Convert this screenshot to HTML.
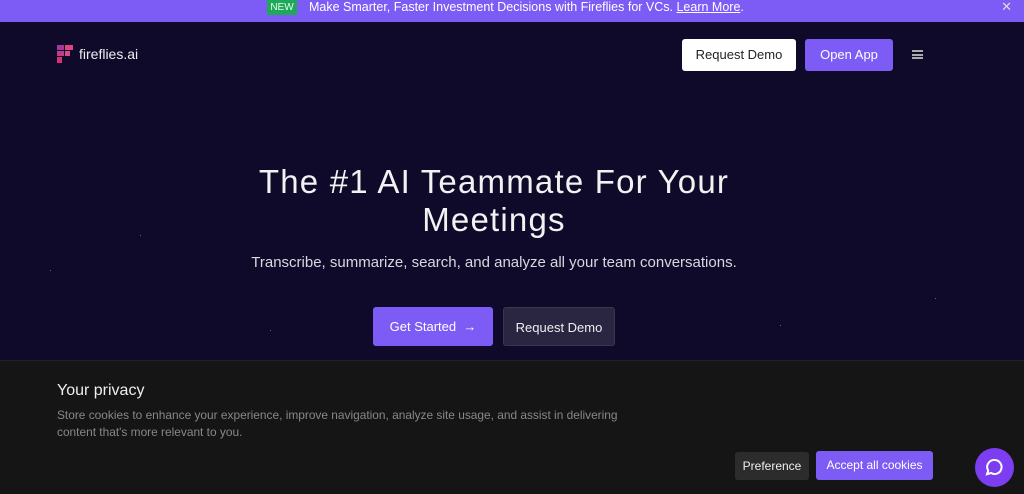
<!DOCTYPE html>
<html><head><style>
*{margin:0;padding:0;box-sizing:border-box}
body{width:1024px;height:494px;overflow:hidden;background:#0f0a2a;font-family:"Liberation Sans",sans-serif;position:relative}
.top{position:absolute;left:0;top:0;width:1024px;height:22px;background:#7c5cf5;color:#fff;font-size:12.5px}
.new{position:absolute;left:267px;top:0;width:30px;height:15px;background:#1fa85a;color:#e6ffe6;font-size:10px;text-align:center;line-height:15px}
.tt{position:absolute;left:309px;top:0;line-height:15px}
.x{position:absolute;right:12px;top:0;line-height:14px;color:#ddd;font-size:13px}
.btn{position:absolute;font-size:13px;text-align:center;border-radius:3px}
.star{position:absolute;width:1px;height:1px;background:#667}
</style></head><body>
<div class="top"><div class="new">NEW</div><div class="tt">Make Smarter, Faster Investment Decisions with Fireflies for VCs. <u>Learn More</u>.</div><div class="x">✕</div></div>
<svg style="position:absolute;left:57px;top:45px" width="16" height="18" viewBox="0 0 16 18"><rect x="0" y="0" width="7" height="5" fill="#a03a9a"/><rect x="8" y="0" width="8" height="5" fill="#e0447c"/><rect x="0" y="6" width="7" height="5" fill="#c23a8a"/><rect x="8" y="6" width="5" height="5" fill="#d84a8c"/><rect x="0" y="12" width="5" height="6" fill="#d8306e"/></svg>
<div style="position:absolute;left:79px;top:46px;color:#eee;font-size:14px">fireflies.ai</div>
<div class="btn" style="left:682px;top:39px;width:114px;height:32px;background:#fff;color:#222;line-height:32px">Request Demo</div>
<div class="btn" style="left:805px;top:39px;width:88px;height:32px;background:#7c5cf5;color:#fff;line-height:32px">Open App</div>
<div style="position:absolute;left:912px;top:50px;width:11px;height:9px;border-top:2px solid #aaa;border-bottom:2px solid #aaa"><div style="margin-top:1.5px;height:2px;background:#aaa"></div></div>
<div style="position:absolute;left:0;top:163px;width:988px;text-align:center;color:#f2f2f2;font-size:33px;line-height:38px;letter-spacing:1.2px">The #1 AI Teammate For Your<br>Meetings</div>
<div style="position:absolute;left:0;top:254px;width:988px;text-align:center;color:#d8d8e0;font-size:15px">Transcribe, summarize, search, and analyze all your team conversations.</div>
<div class="btn" style="left:373px;top:307px;width:120px;height:39px;background:#7c5cf5;color:#fff;line-height:39px">Get Started &nbsp;→</div>
<div class="btn" style="left:503px;top:307px;width:112px;height:39px;background:#2a2540;color:#eee;line-height:39px;border:1px solid #3a3550">Request Demo</div>
<div class="star" style="left:50px;top:270px"></div><div class="star" style="left:270px;top:330px"></div><div class="star" style="left:780px;top:325px"></div><div class="star" style="left:935px;top:298px"></div><div class="star" style="left:140px;top:235px"></div>
<div style="position:absolute;left:0;top:360px;width:1024px;height:134px;background:#151515;border-top:1px solid #222">
<div style="position:absolute;left:57px;top:21px;color:#eee;font-size:16px">Your privacy</div>
<div style="position:absolute;left:57px;top:46px;width:580px;color:#888;font-size:11.9px;line-height:17px">Store cookies to enhance your experience, improve navigation, analyze site usage, and assist in delivering content that's more relevant to you.</div>
<div class="btn" style="left:735px;top:91px;width:74px;height:28px;background:#2c2c2c;color:#eee;line-height:28px;font-size:12px">Preference</div>
<div class="btn" style="left:816px;top:90px;width:117px;height:29px;background:#7c5cf5;color:#fff;line-height:29px;font-size:12px">Accept all cookies</div>
<div style="position:absolute;left:975px;top:87px;width:39px;height:39px;border-radius:50%;background:#7c3ef0"><svg width="39" height="39" viewBox="0 0 39 39"><path d="M19.5 12a7 7 0 1 1-3.5 13l-4 1.2 1.2-3.6A7 7 0 0 1 19.5 12z" fill="none" stroke="#fff" stroke-width="2"/></svg></div>
</div>
</body></html>
